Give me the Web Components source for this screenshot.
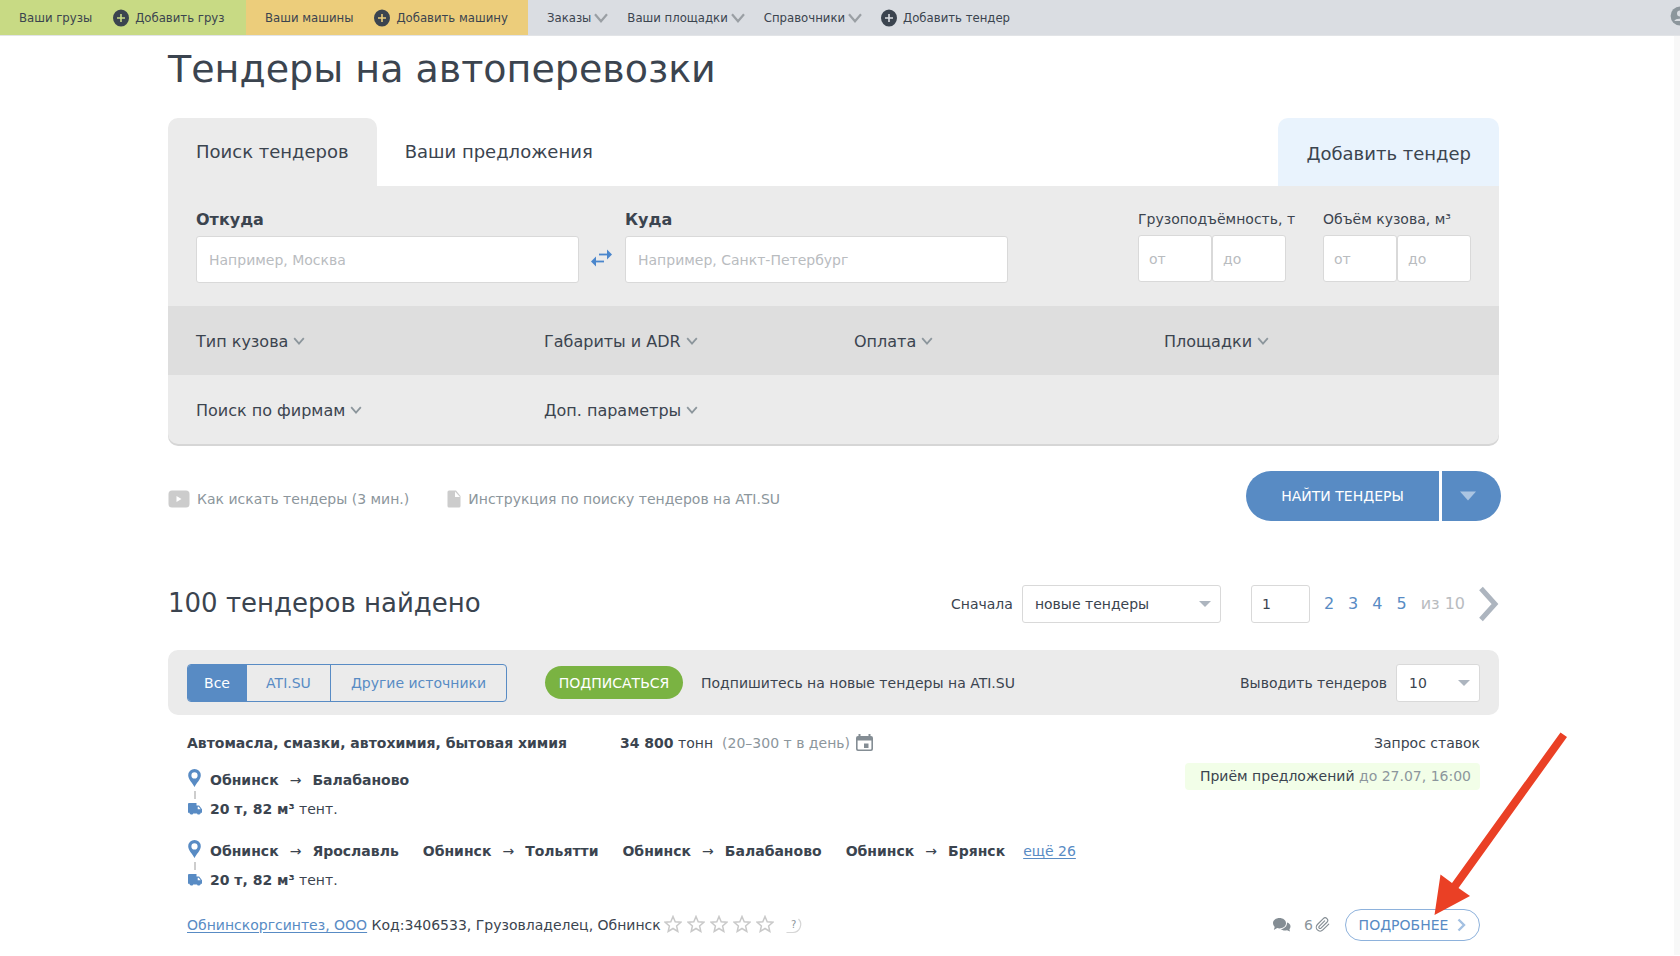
<!DOCTYPE html>
<html lang="ru">
<head>
<meta charset="utf-8">
<meta name="viewport" content="width=device-width, initial-scale=1">
<title>Тендеры на автоперевозки</title>
<style>
  :root {
    --ink: #3b444f;
    --muted: #8c969c;
    --faint: #b9bcbf;
    --blue: #588bc4;
    --panel: #ebebeb;
    --line: #d9d9d9;
  }
  html { background: #fff; }
  body {
    margin: 0;
    min-height: 100vh;
    font-family: "DejaVu Sans", Verdana, sans-serif;
    font-size: 14px;
    line-height: 20px;
    color: var(--ink);
  }
</style>
</head>
<body>
<tender-page></tender-page>

<script>
const define = (name, html) => customElements.define(name, class extends HTMLElement {
  connectedCallback() {
    if (this.shadowRoot) return;
    const root = this.attachShadow({ mode: 'open' });
    const tpl = document.createElement('template');
    tpl.innerHTML = `<style>
      *, *::before, *::after { box-sizing: border-box; }
      button, input, select { font: inherit; color: inherit; margin: 0; }
      button { border: 0; background: none; padding: 0; }
      a { color: inherit; text-decoration: none; }
    </style>` + (typeof html === 'function' ? html(this) : html);
    root.append(tpl.content.cloneNode(true));
  }
});

/* ---------- icons ---------- */
const ICONS = {
  plus: [16, 18, '<ellipse cx="8" cy="9" rx="8" ry="8.6" fill="currentColor"/><path d="M8 5v8M4 9h8" stroke="var(--hole,#fff)" stroke-width="1.6"/>'],
  chevronWide: [14, 10, '<path d="M1 1.2 7 8.2l6-7" fill="none" stroke="#9a9fa4" stroke-width="2.2"/>'],
  chevron: [12, 10, '<path d="M1.2 1.2 6 6.600l4.800-5.400" fill="none" stroke="#8c969c" stroke-width="1.8"/>'],
  user: [20, 20, '<circle cx="10" cy="10" r="9.4" fill="#8c969c"/><circle cx="10" cy="7.5" r="3" fill="#dadde2"/><path d="M4.5 15c0-3 11-3 11 0z" fill="#dadde2"/>'],
  swap: [22, 18, '<path d="M8 5.500h8" stroke="#4a86cc" stroke-width="1.8"/><path d="M16 .5 21 5.500l-5 5z" fill="#4a86cc"/><path d="M5 12.500h8" stroke="#4a86cc" stroke-width="1.8"/><path d="M5 7.500 0 12.500l5 5z" fill="#4a86cc"/>'],
  video: [22, 18, '<rect x=".5" y=".5" width="21" height="17" rx="3.5" fill="#ccc"/><path d="M8.500 6v6l5-3z" fill="#fff"/>'],
  doc: [14, 18, '<path d="M2 .5h7L13.500 6v10a1.500 1.500 0 0 1-1.500 1.500H2A1.500 1.500 0 0 1 .5 16V2A1.500 1.500 0 0 1 2 .5z" fill="#ccc"/><path d="M8 1.500V7h5z" fill="#fff"/>'],
  down: [16, 10, '<path d="M0 .5h16L8 9.500z" fill="#abc5e2"/>'],
  next: [20, 36, '<path d="M2 2.500 16 18 2 33.500" fill="none" stroke="#adb5bf" stroke-width="5"/>'],
  calendar: [17, 18, '<path fill-rule="evenodd" d="M2.500 0h2v2h8V0h2v2H15a2 2 0 0 1 2 2v11a2 2 0 0 1-2 2H2a2 2 0 0 1-2-2V4a2 2 0 0 1 2-2h.5zM1.600 6.500V14.500c0 .6.3.9.9.9h12c.6 0 .9-.3.9-.9V6.500z" fill="#848d94"/><path d="M8 9.500h4.500V14H8z" fill="#848d94"/>'],
  pin: [13, 18, '<path fill-rule="evenodd" d="M6.500 0A6.300 6.300 0 0 1 12.800 6.300C12.800 10.500 8.500 14 6.500 18 4.500 14 .2 10.500 .2 6.300A6.300 6.300 0 0 1 6.500 0zm0 3.300a3 3 0 1 0 0 6.200 3 3 0 0 0 0-6.200z" fill="#588bc4"/>'],
  truck: [14, 12, '<path fill-rule="evenodd" d="M1.200 0H8.500v2.500h2.600L14 6.200v3.600h-1.200a2 2 0 0 1-3.800.6H5.200a2 2 0 0 1-3.800-.6H0V1.200C0 .5.5 0 1.200 0zM9.700 3.800v2.500h3L10.700 3.800z" fill="#588bc4"/>'],
  star: [18, 18, '<path d="M9 1.500 11.200 6.700l5.600.5-4.200 3.700 1.200 5.500L9 13.500l-4.800 2.900 1.200-5.500L1.200 7.200l5.600-.5z" fill="none" stroke="#c9c9c9" stroke-width="1.5"/>'],
  help: [18, 18, '<path d="M1.500 16.500H8A8 8 0 0 0 13.500 3" fill="none" stroke="#d6d6d6" stroke-width="1.2"/>'],
  chat: [18, 14, '<path d="M6.500 0C10 0 13 2.200 13 5.200s-3 5.200-6.500 5.200c-.8 0-1.600-.1-2.300-.3L.8 12l.9-3A5 5 0 0 1 0 5.200C0 2.200 3 0 6.500 0z" fill="#848d94"/><path d="M14 4.500c2 .6 3.500 2 3.500 4 0 1-.4 2-1.100 2.700L17 13.500l-3-1.200c-2.500.7-5 .1-6.400-1.200C11.500 10.800 14.200 8.200 14 4.500z" fill="#848d94"/>'],
  clip: [15, 16, '<path d="M21.440 11.050l-9.190 9.190a6 6 0 0 1-8.490-8.490l9.190-9.190a4 4 0 0 1 5.660 5.660l-9.200 9.190a2 2 0 0 1-2.830-2.830l8.490-8.480" transform="scale(.64)" fill="none" stroke="#848d94" stroke-width="1.800" stroke-linecap="round"/>'],
  more: [9, 14, '<path d="M1.500 1.500 7 7l-5.500 5.500" fill="none" stroke="#a3c0e2" stroke-width="2.4"/>'],
};
define('ui-icon', el => {
  const [w, h, art] = ICONS[el.getAttribute('name')];
  return `<style>:host{display:block;flex:none;width:${w}px;height:${h}px}svg{display:block}</style>
  <svg width="${w}" height="${h}" viewBox="0 0 ${w} ${h}" aria-hidden="true">${art}</svg>`;
});

/* ---------- top bar ---------- */
define('top-bar', `<style>
  :host { display: flex; height: 36px; overflow: hidden; background: #dadde2;
    font-family: "DejaVu Sans Condensed", "DejaVu Sans", Tahoma, sans-serif; font-size: 13px; border-bottom: 1px solid #e2e4e7; }
  nav { display: flex; flex: 1; }
  .zone { display: flex; align-items: center; gap: 21px; padding: 0 19px; }
  .cargo { background: #c8da84; --hole: #c8da84; width: 246px; }
  .trucks { background: #eccd7b; --hole: #eccd7b; width: 282px; }
  .rest { --hole: #dadde2; gap: 19px; }
  a, button { display: flex; align-items: center; gap: 6px; white-space: nowrap; }
  button { gap: 3px; }
  .user { flex: none; width: 10px; padding-bottom: 3px; }
</style>
<nav>
  <div class="zone cargo"><a href="#">Ваши грузы</a><a href="#"><ui-icon name="plus"></ui-icon>Добавить груз</a></div>
  <div class="zone trucks"><a href="#">Ваши машины</a><a href="#"><ui-icon name="plus"></ui-icon>Добавить машину</a></div>
  <div class="zone rest">
    <button type="button">Заказы <ui-icon name="chevronWide"></ui-icon></button>
    <button type="button">Ваши площадки <ui-icon name="chevronWide"></ui-icon></button>
    <button type="button">Справочники <ui-icon name="chevronWide"></ui-icon></button>
    <a href="#"><ui-icon name="plus"></ui-icon>Добавить тендер</a>
  </div>
</nav>
<a class="user" href="#" aria-label="Профиль"><ui-icon name="user"></ui-icon></a>`);

/* ---------- tabs ---------- */
define('page-tabs', `<style>
  :host { display: flex; height: 68px; font-size: 18px; }
  a { display: flex; align-items: center; padding: 0 28px; border-radius: 10px 10px 0 0; white-space: nowrap; }
  .on { background: var(--panel); }
  .add { margin-left: auto; background: #e9f3fd; padding-top: 4px; }
</style>
<a class="on" href="#">Поиск тендеров</a><a href="#">Ваши предложения</a><a class="add" href="#">Добавить тендер</a>`);

/* ---------- form parts ---------- */
define('place-field', el => `<style>
  :host { display: flex; flex-direction: column; gap: 6px; flex: 1; min-width: 0; }
  label { font-size: 16px; font-weight: bold; line-height: 20px; }
  input { height: 47px; width: 100%; padding: 0 12px; border: 1px solid var(--line); border-radius: 3px; background: #fff; }
  input::placeholder { color: var(--faint); opacity: 1; }
</style>
<label for="f">${el.getAttribute('label')}</label><input id="f" type="text" placeholder="${el.getAttribute('hint')}">`);

define('range-field', el => `<style>
  :host { display: block; width: 148px; }
  fieldset { border: 0; margin: 0; padding: 0; min-width: 0; }
  legend { padding: 0; line-height: 18px; margin-bottom: 7px; white-space: nowrap; }
  div { display: flex; }
  input { width: 74px; height: 47px; padding: 0 10px; border: 1px solid var(--line); border-radius: 3px; background: #fff; }
  input::placeholder { color: var(--faint); opacity: 1; }
</style>
<fieldset><legend>${el.getAttribute('label')}</legend>
<div><input type="text" placeholder="от" aria-label="${el.getAttribute('label')}: от"><input type="text" placeholder="до" aria-label="${el.getAttribute('label')}: до"></div></fieldset>`);

define('filter-toggle', `<style>
  :host { display: block; }
  button { display: flex; align-items: center; gap: 5px; font-size: 16px; white-space: nowrap; }
</style>
<button type="button"><slot></slot><ui-icon name="chevron"></ui-icon></button>`);

define('search-panel', `<style>
  :host { display: block; background: var(--panel); border-radius: 0 0 10px 10px; box-shadow: 0 2px 0 #d6d6d6; }
  .fields { display: flex; padding: 24px 28px 0; min-height: 120px; }
  .places { display: flex; width: 812px; align-items: flex-start; }
  .swap { width: 46px; height: 46px; margin-top: 25px; display: flex; align-items: center; justify-content: center; }
  .ranges { display: flex; gap: 37px; margin-left: auto; }
  .filters { display: grid; grid-template-columns: 348fr 310fr 310fr 307fr; align-items: center; height: 69px; padding: 2px 28px 0; }
  .dark { background: #dedede; }
</style>
<div class="fields">
  <div class="places">
    <place-field label="Откуда" hint="Например, Москва"></place-field>
    <button class="swap" type="button" aria-label="Поменять местами"><ui-icon name="swap"></ui-icon></button>
    <place-field label="Куда" hint="Например, Санкт-Петербург"></place-field>
  </div>
  <div class="ranges">
    <range-field label="Грузоподъёмность, т"></range-field>
    <range-field label="Объём кузова, м³"></range-field>
  </div>
</div>
<div class="filters dark">
  <filter-toggle>Тип кузова</filter-toggle><filter-toggle>Габариты и ADR</filter-toggle><filter-toggle>Оплата</filter-toggle><filter-toggle>Площадки</filter-toggle>
</div>
<div class="filters"><filter-toggle>Поиск по фирмам</filter-toggle><filter-toggle>Доп. параметры</filter-toggle></div>`);

define('search-actions', `<style>
  :host { display: flex; align-items: center; margin-right: -2px; }
  .help { display: flex; gap: 7px; align-items: center; color: var(--muted); margin-right: 38px; padding-top: 6px; white-space: nowrap; }
  .find { display: flex; gap: 3px; margin-left: auto; }
  .find button { height: 50px; background: var(--blue); color: #fff; display: flex; align-items: center; justify-content: center; }
  .main { width: 193px; border-radius: 25px 0 0 25px; }
  .drop { width: 59px; border-radius: 0 25px 25px 0; padding-right: 7px; }
</style>
<a class="help" href="#"><ui-icon name="video"></ui-icon>Как искать тендеры (3 мин.)</a>
<a class="help" href="#"><ui-icon name="doc"></ui-icon>Инструкция по поиску тендеров на ATI.SU</a>
<div class="find"><button class="main" type="button">НАЙТИ ТЕНДЕРЫ</button><button class="drop" type="button" aria-label="Ещё варианты"><ui-icon name="down"></ui-icon></button></div>`);

/* ---------- select with its label ---------- */
define('labelled-select', el => `<style>
  :host { display: flex; align-items: center; gap: 9px; }
  .box { position: relative; width: var(--w); }
  select { appearance: none; width: 100%; height: 38px; padding: 0 12px; border: 1px solid var(--line); border-radius: 3px; background: #fff; }
  .box::after { content: ""; position: absolute; right: 10px; top: 16px; border: 6px solid transparent; border-top-color: #adb5bf; border-bottom: 0; pointer-events: none; }
</style>
<label for="s">${el.getAttribute('label')}</label><span class="box"><select id="s"><option>${el.getAttribute('value')}</option></select></span>`);

define('results-head', `<style>
  :host { display: flex; align-items: center; height: 38px; }
  h2 { margin: 0 auto 2px 0; font-size: 26px; font-weight: normal; line-height: 32px; }
  labelled-select { --w: 199px; margin-right: 30px; }
  input { width: 59px; height: 38px; padding: 0 10px; border: 1px solid var(--line); border-radius: 3px; }
  nav { display: flex; align-items: center; gap: 14px; margin-left: 14px; font-size: 16px; color: var(--faint); }
  nav a { color: var(--blue); }
</style>
<h2>100 тендеров найдено</h2>
<labelled-select label="Сначала" value="новые тендеры"></labelled-select>
<input type="text" value="1" aria-label="Страница">
<nav><a href="#">2</a><a href="#">3</a><a href="#">4</a><a href="#">5</a><span>из 10</span><a href="#" aria-label="Следующая страница"><ui-icon name="next"></ui-icon></a></nav>`);

define('results-bar', `<style>
  :host { display: flex; align-items: center; height: 65px; padding: 0 19px; background: var(--panel); border-radius: 10px; }
  .seg { display: flex; height: 38px; border: 1px solid var(--blue); border-radius: 4px; overflow: hidden; color: var(--blue); }
  .seg button { width: 84px; }
  .seg button + button { border-left: 1px solid var(--blue); }
  .seg .on { width: 58px; background: var(--blue); color: #fff; }
  .seg .wide { width: 176px; }
  .sub { width: 138px; height: 33px; margin: 0 18px 0 38px; border-radius: 17px; background: #7ab342; color: #fff; }
  labelled-select { --w: 84px; margin-left: auto; }
</style>
<div class="seg"><button class="on" type="button">Все</button><button type="button">ATI.SU</button><button class="wide" type="button">Другие источники</button></div>
<button class="sub" type="button">ПОДПИСАТЬСЯ</button>
<span>Подпишитесь на новые тендеры на ATI.SU</span>
<labelled-select label="Выводить тендеров" value="10"></labelled-select>`);

/* ---------- tender card ---------- */
define('route-leg', el => `<style>
  :host { display: inline-flex; gap: 11px; font-weight: bold; white-space: nowrap; }
  i { font-style: normal; font-weight: normal; }
</style><span>${el.getAttribute('from')}</span><i>→</i><span>${el.getAttribute('to')}</span>`);

define('route-block', `<style>
  :host { display: grid; grid-template-columns: 15px 1fr; column-gap: 8px; }
  .marks { display: flex; flex-direction: column; align-items: center; }
  .marks i { width: 2px; height: 8px; margin: 4px 0; background: #cdcdcd; }
  .legs { display: flex; gap: 24px; align-items: center; height: 20px; margin-bottom: 9px; }
  .text { margin-top: 1px; }
</style>
<div class="marks"><ui-icon name="pin"></ui-icon><i></i><ui-icon name="truck"></ui-icon></div>
<div class="text"><div class="legs"><slot></slot></div><div><b>20 т, 82 м³</b> тент.</div></div>`);

define('star-rating', `<style>:host { display: flex; gap: 5px; }</style>` + '<ui-icon name="star"></ui-icon>'.repeat(5));

define('pointer-arrow', `<style>:host { display: block; width: 134px; height: 184px; pointer-events: none; } svg { display: block; }</style>
<svg width="134" height="184" viewBox="1434 733 134 184" aria-hidden="true"><path d="M1560.5 733.5 1567 738 1458.500 889 1470 897 1434.500 916 1440.500 875.500 1452 884z" fill="#ea4025"/></svg>`);

define('tender-card', `<style>
  :host { display: block; padding: 18px 19px 14px; }
  .row { display: flex; align-items: center; white-space: nowrap; }
  .name { width: 433px; }
  .muted { color: var(--muted); }
  .per { margin: 0 6px 0 9px; }
  .right { margin-left: auto; }
  .main { display: flex; justify-content: space-between; align-items: flex-start; }
  .routes { display: grid; gap: 21px; margin-top: 16px; }
  .term { margin-top: 10px; padding: 3px 9px 4px 15px; border-radius: 4px; background: #f2fee8; white-space: nowrap; }
  .more { color: var(--blue); text-decoration: underline; text-underline-offset: 2px; margin-left: -6px; }
  .foot { margin-top: 19px; height: 32px; }
  .firm { color: var(--blue); text-decoration: underline; text-underline-offset: 2px; }
  star-rating { margin: 0 11px 2px 3px; }
  .help { position: relative; display: block; width: 18px; height: 18px; font-size: 10px; line-height: 18px; text-align: center; color: var(--muted); }
  .help ui-icon { position: absolute; inset: 0; }
  .acts { display: flex; align-items: center; margin-left: auto; }
  .clip { display: flex; align-items: center; gap: 2px; margin: 0 15px 0 13px; }
  .open { position: relative; }
  .open button { display: flex; align-items: center; justify-content: center; gap: 9px; width: 135px; height: 32px; border: 1px solid #8eb2dc; border-radius: 16px; color: var(--blue); }
  pointer-arrow { position: absolute; left: 89px; bottom: 25px; }
</style>
<div class="row"><b class="name">Автомасла, смазки, автохимия, бытовая химия</b><span><b>34 800</b> тонн</span><span class="muted per">(20–300 т в день)</span><ui-icon name="calendar"></ui-icon><span class="right">Запрос ставок</span></div>
<div class="main">
  <div class="routes">
    <route-block><route-leg from="Обнинск" to="Балабаново"></route-leg></route-block>
    <route-block>
      <route-leg from="Обнинск" to="Ярославль"></route-leg><route-leg from="Обнинск" to="Тольятти"></route-leg><route-leg from="Обнинск" to="Балабаново"></route-leg><route-leg from="Обнинск" to="Брянск"></route-leg><a class="more" href="#">ещё 26</a>
    </route-block>
  </div>
  <div class="term">Приём предложений <span class="muted">до 27.07, 16:00</span></div>
</div>
<div class="row foot">
  <a class="firm" href="#">Обнинскоргсинтез, ООО</a>&nbsp;<span>Код:3406533, Грузовладелец, Обнинск</span>
  <star-rating></star-rating><button class="help" type="button">?<ui-icon name="help"></ui-icon></button>
  <div class="acts muted"><ui-icon name="chat"></ui-icon><span class="clip">6<ui-icon name="clip"></ui-icon></span>
    <span class="open"><button type="button">ПОДРОБНЕЕ <ui-icon name="more"></ui-icon></button><pointer-arrow></pointer-arrow></span></div>
</div>`);

/* ---------- page ---------- */
define('tender-page', `<style>
  :host { display: block; }
  .body { display: flex; }
  main { flex: 1; min-width: 0; padding: 10px 175px 0 10vw; }
  .rail { flex: none; width: 6px; background: #f8f8f8; }
  h1 { margin: 0 0 26px; font-size: 38px; line-height: 46px; font-weight: normal; }
  search-actions { margin-top: 27px; }
  results-head { margin-top: 64px; }
  results-bar { margin-top: 27px; }
</style>
<top-bar></top-bar>
<div class="body">
  <main>
    <h1>Тендеры на автоперевозки</h1>
    <page-tabs></page-tabs>
    <search-panel></search-panel>
    <search-actions></search-actions>
    <results-head></results-head>
    <results-bar></results-bar>
    <tender-card></tender-card>
  </main>
  <div class="rail"></div>
</div>`);
</script>
</body>
</html>
